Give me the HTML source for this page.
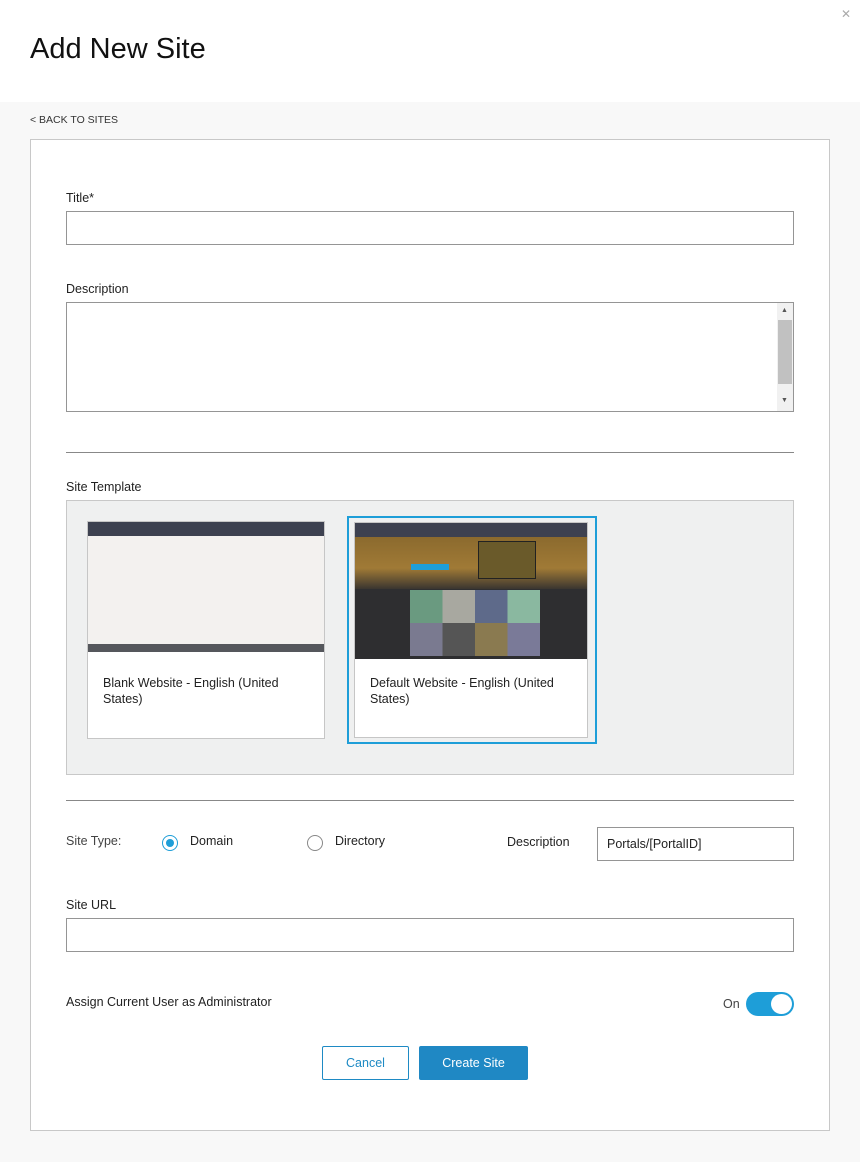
<!DOCTYPE html>
<html><head><style>
*{box-sizing:border-box;margin:0;padding:0}
body{width:860px;height:1162px;background:#f8f8f8;font-family:"Liberation Sans",sans-serif;color:#222;position:relative;overflow:hidden}
.abs{position:absolute}
.hdr{left:0;top:0;width:860px;height:102px;background:#fff}
.lbl{font-size:12.5px;color:#222}
.inp{border:1px solid #959595;background:#fff}
.hr{height:1px;background:#888;left:66px;width:728px}
</style></head><body>
<div class="abs hdr"></div>
<div class="abs" style="left:841px;top:7px;font-size:12px;color:#aaa">✕</div>
<div class="abs" style="left:30px;top:33px;font-size:29px;color:#111">Add New Site</div>
<div class="abs" style="left:30px;top:114px;font-size:10.5px;color:#333">&lt; BACK TO SITES</div>
<div class="abs" style="left:30px;top:139px;width:800px;height:992px;background:#fff;border:1px solid #c8c8c8"></div>

<div class="abs lbl" style="left:66px;top:191px">Title*</div>
<div class="abs inp" style="left:66px;top:211px;width:728px;height:34px"></div>
<div class="abs lbl" style="left:66px;top:282px">Description</div>
<div class="abs inp" style="left:66px;top:302px;width:728px;height:110px"></div>
<div class="abs" style="left:777px;top:303px;width:16px;height:108px;background:#f1f1f1"></div>
<div class="abs" style="left:778px;top:320px;width:14px;height:64px;background:#c1c1c1"></div>
<div class="abs" style="left:781px;top:307px;font-size:7px;color:#555">▲</div>
<div class="abs" style="left:781px;top:397px;font-size:7px;color:#555">▼</div>

<div class="abs hr" style="top:452px"></div>
<div class="abs lbl" style="left:66px;top:480px">Site Template</div>
<div class="abs" style="left:66px;top:500px;width:728px;height:275px;background:#eff0f0;border:1px solid #c8c8c8"></div>

<div class="abs" style="left:87px;top:521px;width:238px;height:218px;background:#fff;border:1px solid #c6c6c6"></div>
<div class="abs" style="left:88px;top:522px;width:236px;height:14px;background:#3d4150"></div>
<div class="abs" style="left:88px;top:536px;width:236px;height:108px;background:#f3f1ef"></div>
<div class="abs" style="left:88px;top:644px;width:236px;height:8px;background:#55575c"></div>
<div class="abs" style="left:103px;top:675px;font-size:12.5px;line-height:16px;width:200px">Blank Website - English (United States)</div>

<div class="abs" style="left:347px;top:516px;width:250px;height:228px;border:2px solid #1e9ed8"></div>
<div class="abs" style="left:354px;top:522px;width:234px;height:216px;background:#fff;border:1px solid #c6c6c6"></div>
<div class="abs" style="left:355px;top:523px;width:232px;height:14px;background:#3d4150"></div>
<div class="abs" style="left:355px;top:537px;width:232px;height:52px;background:linear-gradient(#8b6a2e,#a07a36 60%,#3a3530)"></div>
<div class="abs" style="left:478px;top:541px;width:58px;height:38px;background:#6a5a2a;border:1px solid #222"></div>
<div class="abs" style="left:411px;top:564px;width:38px;height:6px;background:#1e9ed8"></div>
<div class="abs" style="left:355px;top:589px;width:232px;height:70px;background:#2e2e30"></div>
<div class="abs" style="left:410px;top:590px;width:130px;height:66px;background:linear-gradient(90deg,#6a9a80 0 25%,#a8a8a0 25% 50%,#5e6a8a 50% 75%,#8ab8a0 75%)"></div>
<div class="abs" style="left:410px;top:623px;width:130px;height:33px;background:linear-gradient(90deg,#7a7a90 0 25%,#555 25% 50%,#8a7a50 50% 75%,#7a7a98 75%)"></div>
<div class="abs" style="left:370px;top:675px;font-size:12.5px;line-height:16px;width:200px">Default Website - English (United States)</div>

<div class="abs hr" style="top:800px"></div>
<div class="abs" style="left:66px;top:834px;font-size:12.5px;color:#444">Site Type:</div>
<div class="abs" style="left:162px;top:835px;width:16px;height:16px;border-radius:50%;border:1px solid #1e9ed8"></div>
<div class="abs" style="left:166px;top:839px;width:8px;height:8px;border-radius:50%;background:#1e9ed8"></div>
<div class="abs lbl" style="left:190px;top:834px">Domain</div>
<div class="abs" style="left:307px;top:835px;width:16px;height:16px;border-radius:50%;border:1px solid #888"></div>
<div class="abs lbl" style="left:335px;top:834px">Directory</div>
<div class="abs lbl" style="left:507px;top:835px">Description</div>
<div class="abs inp" style="left:597px;top:827px;width:197px;height:34px"></div>
<div class="abs lbl" style="left:607px;top:837px">Portals/[PortalID]</div>

<div class="abs lbl" style="left:66px;top:898px">Site URL</div>
<div class="abs inp" style="left:66px;top:918px;width:728px;height:34px"></div>
<div class="abs lbl" style="left:66px;top:995px">Assign Current User as Administrator</div>
<div class="abs lbl" style="left:723px;top:997px;color:#444">On</div>
<div class="abs" style="left:746px;top:992px;width:48px;height:24px;border-radius:12px;background:#1e9ed8"></div>
<div class="abs" style="left:771px;top:994px;width:21px;height:20px;border-radius:50%;background:#fff"></div>

<div class="abs" style="left:322px;top:1046px;width:87px;height:34px;border:1px solid #1e8ac4;border-radius:2px;background:#fff;color:#1e8ac4;font-size:12.5px;text-align:center;line-height:32px">Cancel</div>
<div class="abs" style="left:419px;top:1046px;width:109px;height:34px;border-radius:2px;background:#1f88c4;color:#fff;font-size:12.5px;text-align:center;line-height:34px">Create Site</div>
</body></html>
